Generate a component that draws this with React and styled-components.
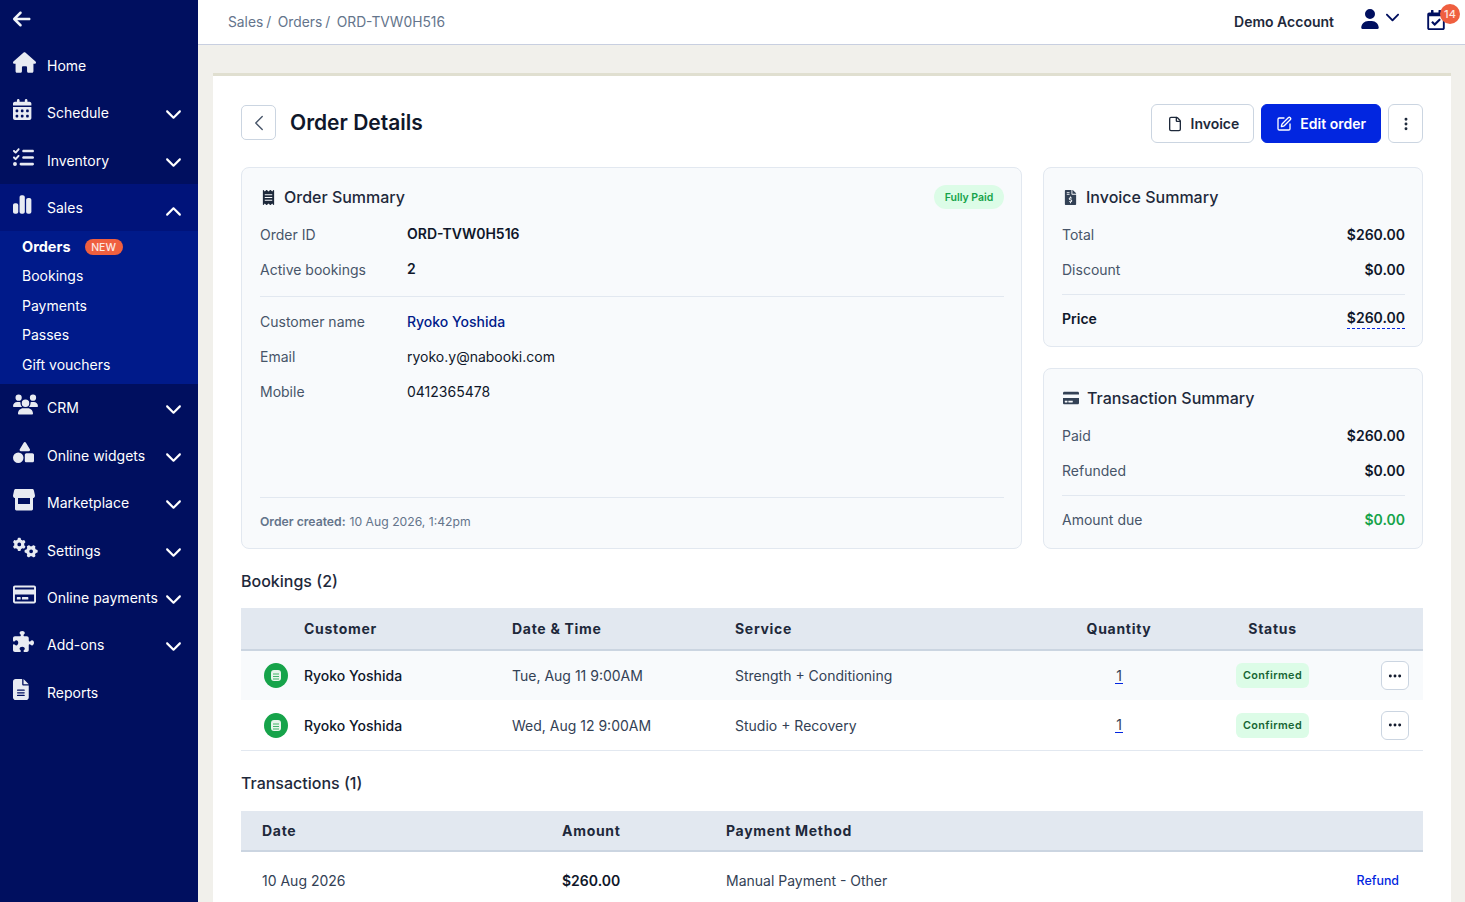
import React from "react";
import styled, { createGlobalStyle } from "styled-components";
import { FaRegCreditCard, FaRegCalendarCheck, FaFileInvoiceDollar, FaCreditCard, FaReceipt } from "react-icons/fa";
import {
  FaArrowLeft,
  FaHouse,
  FaCalendarDays,
  FaListCheck,
  FaChartSimple,
  FaUsers,
  FaShapes,
  FaGears,
  FaPuzzlePiece,
  FaFileLines,
  FaChevronDown,
  FaChevronUp,
  FaUser,
} from "react-icons/fa6";
import { ChevronLeft, File, SquarePen, EllipsisVertical, Ellipsis } from "lucide-react";

const GlobalStyle = createGlobalStyle`
  html, body {
    margin: 0;
    height: 100%;
    overflow: hidden;
  }
  body {
    font-family: Inter, "Liberation Sans", sans-serif;
    color: #0f172a;
  }
  * {
    box-sizing: border-box;
  }
`;

const StoreIcon = ({ size }) => (
  <svg width={size} height={size} viewBox="0 0 22 22" fill="currentColor">
    <path d="M3 0h16c1 0 1.600.5 1.900 1.400L22 6.500C22 8.400 20.800 9 19.800 9H2.200C1.200 9 0 8.400 0 6.500L1.100 1.400C1.400.5 2 0 3 0z" />
    <path
      fillRule="evenodd"
      d="M2 8h18v12c0 .8-.6 1.400-1.400 1.400H3.400C2.600 21.400 2 20.800 2 20zM5 9v6h12V9z"
    />
  </svg>
);

const NAV_TOP = [
  { label: "Home", icon: FaHouse, size: 23 },
  { label: "Schedule", icon: FaCalendarDays, size: 21, more: true },
  { label: "Inventory", icon: FaListCheck, size: 21, more: true },
];

const NAV_BOTTOM = [
  { label: "CRM", icon: FaUsers, size: 25, more: true },
  { label: "Online widgets", icon: FaShapes, size: 21, more: true },
  { label: "Marketplace", icon: StoreIcon, size: 22, more: true },
  { label: "Settings", icon: FaGears, size: 25, more: true },
  { label: "Online payments", icon: FaRegCreditCard, size: 23, more: true },
  { label: "Add-ons", icon: FaPuzzlePiece, size: 21, more: true },
  { label: "Reports", icon: FaFileLines, size: 21 },
];

const SUB_NAV = ["Bookings", "Payments", "Passes", "Gift vouchers"];

const BOOKINGS = [
  { date: "Tue, Aug 11 9:00AM", service: "Strength + Conditioning", tinted: true },
  { date: "Wed, Aug 12 9:00AM", service: "Studio + Recovery" },
];

const NavRow = ({ item }) => {
  const Icon = item.icon;
  return (
    <NavItem>
      <NavIcon>
        <Icon size={item.size} preserveAspectRatio="xMinYMid meet" />
      </NavIcon>
      <NavLabel>{item.label}</NavLabel>
      {item.more && (
        <NavChevron>
          <FaChevronDown size={17} />
        </NavChevron>
      )}
    </NavItem>
  );
};

const Sidebar = () => (
  <Side>
    <BackRow>
      <FaArrowLeft size={20} preserveAspectRatio="xMinYMid meet" />
    </BackRow>
    {NAV_TOP.map((item) => (
      <NavRow key={item.label} item={item} />
    ))}
    <SalesItem>
      <NavIcon>
        <FaChartSimple size={21} preserveAspectRatio="xMinYMid meet" />
      </NavIcon>
      <NavLabel>Sales</NavLabel>
      <NavChevron $up>
        <FaChevronUp size={17} />
      </NavChevron>
    </SalesItem>
    <SubNav>
      <SubItem $bold>
        Orders
        <NewBadge>NEW</NewBadge>
      </SubItem>
      {SUB_NAV.map((label) => (
        <SubItem key={label}>{label}</SubItem>
      ))}
    </SubNav>
    {NAV_BOTTOM.map((item) => (
      <NavRow key={item.label} item={item} />
    ))}
  </Side>
);

const TopBar = () => (
  <Top>
    <Crumbs>
      <span>Sales</span>
      <Slash>/</Slash>
      <span>Orders</span>
      <Slash>/</Slash>
      <span>ORD-TVW0H516</span>
    </Crumbs>
    <TopRight>
      <AccountName>Demo Account</AccountName>
      <AccountMenu>
        <FaUser size={20} />
        <FaChevronDown size={15} />
      </AccountMenu>
      <CalendarWrap>
        <FaRegCalendarCheck size={20} />
        <CountBadge>14</CountBadge>
      </CalendarWrap>
    </TopRight>
  </Top>
);

const SummaryLine = ({ label, value, strong, green, dashed }) => (
  <Line>
    <LineLabel $strong={strong}>{label}</LineLabel>
    <LineValue $green={green} $dashed={dashed}>
      {value}
    </LineValue>
  </Line>
);

const App = () => (
  <>
    <GlobalStyle />
    <Shell>
      <Sidebar />
      <Main>
        <TopBar />
        <Content>
          <Sheet>
            <PageHeader>
              <PageTitleGroup>
                <BackButton>
                  <ChevronLeft size={26} strokeWidth={1.3} />
                </BackButton>
                <PageTitle>Order Details</PageTitle>
              </PageTitleGroup>
              <Actions>
                <OutlineButton>
                  <File size={16} strokeWidth={2} />
                  Invoice
                </OutlineButton>
                <PrimaryButton>
                  <SquarePen size={16} strokeWidth={2} />
                  Edit order
                </PrimaryButton>
                <KebabButton>
                  <EllipsisVertical size={16} strokeWidth={2.4} />
                </KebabButton>
              </Actions>
            </PageHeader>

            <SummaryGrid>
              <OrderCard>
                <CardHead>
                  <CardTitle>
                    <FaReceipt size={15} />
                    Order Summary
                  </CardTitle>
                  <PaidPill>Fully Paid</PaidPill>
                </CardHead>
                <Field>
                  <FieldLabel>Order ID</FieldLabel>
                  <FieldValue $strong>ORD-TVW0H516</FieldValue>
                </Field>
                <Field>
                  <FieldLabel>Active bookings</FieldLabel>
                  <FieldValue $strong>2</FieldValue>
                </Field>
                <CardRule />
                <Field>
                  <FieldLabel>Customer name</FieldLabel>
                  <FieldLink>Ryoko Yoshida</FieldLink>
                </Field>
                <Field>
                  <FieldLabel>Email</FieldLabel>
                  <FieldValue>ryoko.y@nabooki.com</FieldValue>
                </Field>
                <Field>
                  <FieldLabel>Mobile</FieldLabel>
                  <FieldValue>0412365478</FieldValue>
                </Field>
                <CreatedNote>
                  <b>Order created:</b> 10 Aug 2026, 1:42pm
                </CreatedNote>
              </OrderCard>

              <SideCards>
                <Card>
                  <CardHead>
                    <CardTitle>
                      <FaFileInvoiceDollar size={15} color="#334155" />
                      Invoice Summary
                    </CardTitle>
                  </CardHead>
                  <SummaryLine label="Total" value="$260.00" />
                  <SummaryLine label="Discount" value="$0.00" />
                  <LineRule />
                  <SummaryLine label="Price" value="$260.00" strong dashed />
                </Card>
                <Card>
                  <CardHead>
                    <CardTitle>
                      <FaCreditCard size={16} color="#334155" />
                      Transaction Summary
                    </CardTitle>
                  </CardHead>
                  <SummaryLine label="Paid" value="$260.00" />
                  <SummaryLine label="Refunded" value="$0.00" />
                  <LineRule />
                  <SummaryLine label="Amount due" value="$0.00" green />
                </Card>
              </SideCards>
            </SummaryGrid>

            <SectionTitle>Bookings (2)</SectionTitle>
            <BookingHead>
              <span />
              <span>Customer</span>
              <span>Date &amp; Time</span>
              <span>Service</span>
              <CenterCell>Quantity</CenterCell>
              <CenterCell>Status</CenterCell>
              <span />
            </BookingHead>
            {BOOKINGS.map((row) => (
              <BookingRow key={row.date} $tinted={row.tinted}>
                <GreenDot>
                  <svg width="10" height="11" viewBox="0 0 10 11">
                    <rect width="10" height="11" rx="3" fill="#e8f5ec" />
                    <path d="M2 4h6M2 6.500h6M2 9h6" stroke="#16a34a" strokeWidth="0.8" />
                  </svg>
                </GreenDot>
                <CustomerName>Ryoko Yoshida</CustomerName>
                <span>{row.date}</span>
                <span>{row.service}</span>
                <CenterCell>
                  <QuantityLink>1</QuantityLink>
                </CenterCell>
                <CenterCell>
                  <StatusPill>Confirmed</StatusPill>
                </CenterCell>
                <RowMenu>
                  <Ellipsis size={16} strokeWidth={2.4} />
                </RowMenu>
              </BookingRow>
            ))}

            <TransactionsTitle>Transactions (1)</TransactionsTitle>
            <TransactionHead>
              <span>Date</span>
              <span>Amount</span>
              <span>Payment Method</span>
              <span />
            </TransactionHead>
            <TransactionRow>
              <span>10 Aug 2026</span>
              <AmountCell>$260.00</AmountCell>
              <span>Manual Payment - Other</span>
              <RefundLink>Refund</RefundLink>
            </TransactionRow>
          </Sheet>
        </Content>
      </Main>
    </Shell>
  </>
);

export default App;

const Shell = styled.div`
  display: flex;
  height: 902px;
  overflow: hidden;
`;

const Side = styled.nav`
  flex: 0 0 198px;
  background: #000f5f;
  color: #fff;
  display: flex;
  flex-direction: column;
`;

const BackRow = styled.div`
  height: 41.7px;
  padding: 0 0 3px 13px;
  display: flex;
  align-items: center;
  color: #f1f5f9;
`;

const NavItem = styled.div`
  height: 47.4px;
  padding: 0 16px 0 13px;
  display: flex;
  align-items: center;
  font-size: 14px;
  font-weight: 400;
`;

const SalesItem = styled(NavItem)`
  background: #00137a;
`;

const NavIcon = styled.span`
  width: 34px;
  flex: none;
  display: flex;
  align-items: center;
  color: #e8ebf2;
  transform: translateY(-3px);
`;

const NavLabel = styled.span`
  flex: 1;
  white-space: nowrap;
`;

const NavChevron = styled.span`
  display: flex;
  transform: translateY(${(p) => (p.$up ? "5px" : "1px")});
`;

const SubNav = styled.div`
  height: 153px;
  padding: 0 0 5px 22px;
  background: #001a8a;
  display: flex;
  flex-direction: column;
  justify-content: center;
`;

const SubItem = styled.div`
  height: 29.5px;
  display: flex;
  align-items: center;
  gap: 14px;
  font-size: ${(p) => (p.$bold ? "14.5px" : "14px")};
  font-weight: ${(p) => (p.$bold ? 700 : 400)};
`;

const NewBadge = styled.span`
  background: #ef5f3f;
  color: #fde8e2;
  border-radius: 8px;
  width: 38px;
  height: 16px;
  font-size: 10.5px;
  font-weight: 500;
  display: flex;
  align-items: center;
  justify-content: center;
  transform: translateY(1px);
`;

const Main = styled.div`
  flex: 1;
  min-width: 0;
  display: flex;
  flex-direction: column;
  background: #f1f0eb;
`;

const Top = styled.header`
  flex: none;
  height: 45px;
  padding: 0 5px 1px 30px;
  background: #fff;
  border-bottom: 1px solid #c8cfe0;
  display: flex;
  align-items: center;
  justify-content: space-between;
`;

const Crumbs = styled.div`
  display: flex;
  font-size: 13.8px;
  color: #64748b;
`;

const Slash = styled.span`
  margin: 0 6.5px 0 3px;
`;

const TopRight = styled.div`
  display: flex;
  align-items: center;
`;

const AccountName = styled.span`
  font-size: 14px;
  font-weight: 600;
  color: #1e293b;
  margin-right: 26px;
`;

const AccountMenu = styled.span`
  display: flex;
  align-items: flex-start;
  gap: 5px;
  color: #000f5f;
  margin-right: 26px;
  margin-top: -5px;
`;

const CalendarWrap = styled.span`
  position: relative;
  display: flex;
  width: 34px;
  margin-top: -4px;
  color: #000f5f;
`;

const CountBadge = styled.span`
  position: absolute;
  top: -6px;
  left: 14px;
  width: 20px;
  height: 20px;
  border-radius: 50%;
  background: #ef5f3f;
  color: #fde8e2;
  font-size: 11px;
  font-weight: 500;
  display: flex;
  align-items: center;
  justify-content: center;
`;

const Content = styled.main`
  flex: 1;
  padding: 28px 14px 0 15px;
`;

const Sheet = styled.section`
  background: #fff;
  border-top: 3px solid #e0dfd0;
  padding: 28px 28px 0;
  height: 900px;
`;

const PageHeader = styled.div`
  height: 39px;
  display: flex;
  align-items: flex-start;
  justify-content: space-between;
`;

const PageTitleGroup = styled.div`
  display: flex;
  align-items: center;
  gap: 14px;
  margin-top: 1px;
`;

const BackButton = styled.button`
  width: 35px;
  height: 35px;
  padding: 0;
  border: 1px solid #cbd5e1;
  border-radius: 5px;
  background: #fff;
  color: #475569;
  display: flex;
  align-items: center;
  justify-content: center;
`;

const PageTitle = styled.h1`
  margin: 0;
  font-size: 21px;
  font-weight: 600;
  color: #0f172a;
`;

const Actions = styled.div`
  display: flex;
  gap: 7px;
`;

const OutlineButton = styled.button`
  height: 39px;
  padding: 0 14px 0 15px;
  border: 1px solid #cbd5e1;
  border-radius: 6px;
  background: #fff;
  color: #1e293b;
  font: 600 14px Inter, sans-serif;
  display: flex;
  align-items: center;
  gap: 8px;
`;

const PrimaryButton = styled(OutlineButton)`
  background: #0226e0;
  border-color: #0226e0;
  color: #fff;
  padding: 0 14px;
`;

const KebabButton = styled(OutlineButton)`
  width: 35px;
  padding: 0;
  justify-content: center;
`;

const SummaryGrid = styled.div`
  margin-top: 24px;
  display: grid;
  grid-template-columns: 781px 380px;
  gap: 21px;
  height: 382px;
`;

const Card = styled.div`
  background: #f8fafc;
  border: 1px solid #e2e8f0;
  border-radius: 8px;
  padding: 0 17px 0 18px;
`;

const OrderCard = styled(Card)`
  display: flex;
  flex-direction: column;
`;

const SideCards = styled.div`
  display: grid;
  grid-template-rows: 180px 181px;
  gap: 21px;
`;

const CardHead = styled.div`
  height: 49px;
  padding-top: 9px;
  display: flex;
  align-items: center;
  justify-content: space-between;
`;

const CardTitle = styled.h2`
  margin: 0;
  padding-left: 1px;
  font-size: 16px;
  font-weight: 500;
  color: #1e293b;
  display: flex;
  align-items: center;
  gap: 8px;
`;

const PaidPill = styled.span`
  background: #dcfce7;
  color: #16a34a;
  border-radius: 12px;
  height: 24px;
  width: 70px;
  font-size: 10.5px;
  font-weight: 600;
  display: flex;
  align-items: center;
  justify-content: center;
`;

const Field = styled.div`
  height: 35px;
  display: flex;
  align-items: center;
  font-size: 14px;
`;

const FieldLabel = styled.span`
  width: 147px;
  color: #475569;
`;

const FieldValue = styled.span`
  color: #0f172a;
  font-weight: ${(p) => (p.$strong ? 600 : 400)};
  position: relative;
  top: ${(p) => (p.$strong ? "-1px" : "0")};
`;

const FieldLink = styled.span`
  color: #001a8a;
  font-weight: 500;
`;

const CardRule = styled.div`
  height: 1px;
  background: #e2e8f0;
  margin: 9px 0 7px;
`;

const CreatedNote = styled.div`
  margin-top: auto;
  height: 51px;
  padding-bottom: 4px;
  border-top: 1px solid #e2e8f0;
  display: flex;
  align-items: center;
  gap: 4px;
  font-size: 12.2px;
  color: #64748b;
  b {
    font-weight: 600;
  }
`;

const Line = styled.div`
  height: 35px;
  display: flex;
  align-items: center;
  justify-content: space-between;
  font-size: 14px;
`;

const LineLabel = styled.span`
  color: ${(p) => (p.$strong ? "#0f172a" : "#475569")};
  font-weight: ${(p) => (p.$strong ? 600 : 400)};
`;

const LineValue = styled.span`
  color: ${(p) => (p.$green ? "#16a34a" : "#0f172a")};
  font-weight: 600;
  border-bottom: ${(p) => (p.$dashed ? "1px dashed #0226e0" : "none")};
  line-height: 20px;
`;

const LineRule = styled.div`
  height: 1px;
  background: #e2e8f0;
  margin: 7px 0 6px;
`;

const SectionTitle = styled.h3`
  margin: 22px 0 17px;
  font-size: 16px;
  line-height: 20px;
  font-weight: 500;
  color: #1e293b;
`;

const TransactionsTitle = styled(SectionTitle)`
  margin: 22px 0 18px;
`;

const bookingColumns = "63px 208px 223px 294px 180px 127px 1fr";

const BookingHead = styled.div`
  height: 43px;
  display: grid;
  grid-template-columns: ${bookingColumns};
  align-items: center;
  background: #e2e8f0;
  border-bottom: 2px solid #cbd5e1;
  font-size: 14px;
  font-weight: 700;
  letter-spacing: 0.7px;
  color: #1e293b;
`;

const BookingRow = styled.div`
  height: ${(p) => (p.$tinted ? "49px" : "51px")};
  display: grid;
  grid-template-columns: ${bookingColumns};
  align-items: center;
  background: ${(p) => (p.$tinted ? "#f8fafc" : "#fff")};
  border-bottom: ${(p) => (p.$tinted ? "none" : "1px solid #e2e8f0")};
  font-size: 14px;
  color: #334155;
`;

const CenterCell = styled.span`
  display: flex;
  justify-content: center;
`;

const GreenDot = styled.span`
  margin-left: 23px;
  width: 24px;
  height: 25px;
  border-radius: 50%;
  background: #16a34a;
  display: flex;
  align-items: center;
  justify-content: center;
`;

const CustomerName = styled.span`
  color: #0f172a;
  font-weight: 500;
`;

const QuantityLink = styled.span`
  color: #334155;
  border-bottom: 1px solid #0226e0;
  line-height: 15px;
  padding: 0 1px;
`;

const StatusPill = styled.span`
  background: #dcfce7;
  color: #166534;
  border-radius: 6px;
  width: 73px;
  height: 25px;
  font-size: 10.8px;
  font-weight: 600;
  letter-spacing: 0.4px;
  display: flex;
  align-items: center;
  justify-content: center;
`;

const RowMenu = styled.button`
  width: 28px;
  height: 29px;
  padding: 0;
  border: 1px solid #cbd5e1;
  border-radius: 6px;
  background: #fff;
  color: #0f172a;
  justify-self: end;
  margin-right: 14px;
  display: flex;
  align-items: center;
  justify-content: center;
`;

const transactionColumns = "300px 164px 1fr 80px";

const TransactionHead = styled.div`
  height: 41px;
  padding-left: 21px;
  display: grid;
  grid-template-columns: ${transactionColumns};
  align-items: center;
  background: #e2e8f0;
  border-bottom: 2px solid #cbd5e1;
  font-size: 14px;
  font-weight: 700;
  letter-spacing: 0.7px;
  color: #1e293b;
`;

const TransactionRow = styled.div`
  height: 56px;
  padding-left: 21px;
  display: grid;
  grid-template-columns: ${transactionColumns};
  align-items: center;
  font-size: 14px;
  color: #334155;
`;

const AmountCell = styled.span`
  color: #0f172a;
  font-weight: 600;
`;

const RefundLink = styled.span`
  color: #0226e0;
  font-size: 12.4px;
  font-weight: 500;
  justify-self: end;
  margin-right: 24px;
`;
